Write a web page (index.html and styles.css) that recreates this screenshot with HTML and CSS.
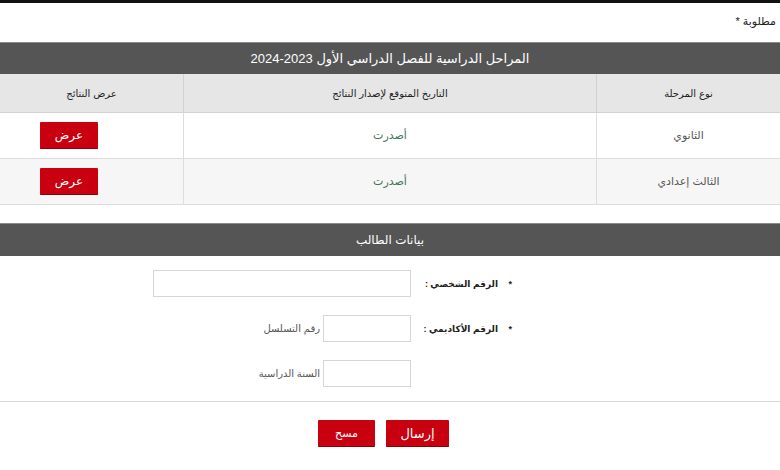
FILE: index.html
```html
<!DOCTYPE html>
<html lang="ar" dir="rtl">
<head>
    <meta charset="UTF-8">
    <meta name="viewport" content="width=device-width, initial-scale=1.0">
    <title>نتائج الطلاب</title>
    <link rel="stylesheet" href="styles.css">
</head>
<body>
    <div class="topbar"></div>
    <p class="required">مطلوبة *</p>

    <div class="bar">المراحل الدراسية للفصل الدراسي الأول 2023-2024</div>
    <table class="results">
        <thead>
            <tr>
                <th class="col-type">نوع المرحلة</th>
                <th>التاريخ المتوقع لإصدار النتائج</th>
                <th class="col-view">عرض النتائج</th>
            </tr>
        </thead>
        <tbody>
            <tr>
                <td class="stage">الثانوي</td>
                <td class="status">أصدرت</td>
                <td class="view"><button class="btn btn-small">عرض</button></td>
            </tr>
            <tr class="alt">
                <td class="stage">الثالث إعدادي</td>
                <td class="status">أصدرت</td>
                <td class="view"><button class="btn btn-small">عرض</button></td>
            </tr>
        </tbody>
    </table>

    <div class="bar bar-second">بيانات الطالب</div>
    <form class="student-form">
        <div class="form-row">
            <label class="label"><span class="star">*</span> الرقم الشخصي :</label>
            <input type="text" class="input input-wide">
        </div>
        <div class="form-row">
            <label class="label"><span class="star">*</span> الرقم الأكاديمي :</label>
            <input type="text" class="input input-short">
            <span class="hint">رقم التسلسل</span>
        </div>
        <div class="form-row">
            <span class="label"></span>
            <input type="text" class="input input-short">
            <span class="hint">السنة الدراسية</span>
        </div>
        <div class="actions">
            <button type="button" class="btn btn-big">إرسال</button>
            <button type="reset" class="btn btn-clear">مسح</button>
        </div>
    </form>
</body>
</html>
```

FILE: styles.css
```css
body {
    margin: 0;
    font-family: 'Liberation Sans', 'DejaVu Sans', sans-serif;
    color: #333;
    background: #fff;
}
.topbar {
    height: 3px;
    background-color: #111;
}
.required {
    margin: 0;
    padding: 12px 4px 0 0;
    height: 27px;
    font-size: 11px;
    color: #222;
}
.bar {
    height: 31px;
    line-height: 31px;
    background-color: #555;
    border-top: 1px solid #8a8a8a;
    color: #fff;
    text-align: center;
    font-size: 13px;
}
.bar-second {
    margin-top: 18px;
    height: 32px;
    line-height: 32px;
    font-size: 12px;
}
.results {
    width: 100%;
    border-collapse: collapse;
}
.results th {
    height: 38px;
    padding: 0;
    background-color: #e6e6e6;
    color: #222;
    font-size: 10px;
    font-weight: normal;
    border-left: 1px solid #d2d2d2;
    border-bottom: 1px solid #d2d2d2;
}
.results th.col-view {
    border-left: none;
}
.col-type,
.col-view {
    width: 183px;
}
.results td {
    height: 45px;
    padding: 0;
    text-align: center;
    font-size: 11px;
    border-left: 1px solid #ddd;
    border-bottom: 1px solid #ddd;
}
.results td.view {
    border-left: none;
    text-align: left;
    padding-left: 40px;
}
.results tr.alt td {
    background-color: #f6f6f6;
}
.stage {
    color: #555;
}
.status {
    color: #3f7554;
}
.btn {
    background-color: #c8000f;
    color: #fff;
    border: none;
    border-bottom: 1px solid #8e0008;
    border-radius: 1px;
    font-family: 'Liberation Sans', 'DejaVu Sans', sans-serif;
    cursor: pointer;
    padding: 0;
}
.btn-small {
    width: 58px;
    height: 27px;
    font-size: 12px;
}
.student-form {
    padding-top: 14px;
}
.form-row {
    display: flex;
    align-items: center;
    padding-right: 268px;
    height: 27px;
    margin-bottom: 18px;
}
.label {
    width: 101px;
    font-size: 9px;
    font-weight: bold;
    color: #222;
}
.star {
    margin-left: 8px;
}
.input {
    height: 27px;
    box-sizing: border-box;
    border: 1px solid #d6d6d6;
    background: #fff;
    margin: 0;
}
.input-wide {
    width: 258px;
}
.input-short {
    width: 88px;
}
.hint {
    margin-right: 3px;
    font-size: 10px;
    color: #555;
}
.actions {
    display: flex;
    justify-content: center;
    gap: 11px;
    margin-top: -4px;
    padding: 18px 13px 0 0;
    border-top: 1px solid #d6d6d6;
}
.btn-big {
    width: 63px;
    height: 27px;
    font-size: 13px;
}
.btn-clear {
    width: 57px;
    height: 27px;
    font-size: 11px;
}
```
